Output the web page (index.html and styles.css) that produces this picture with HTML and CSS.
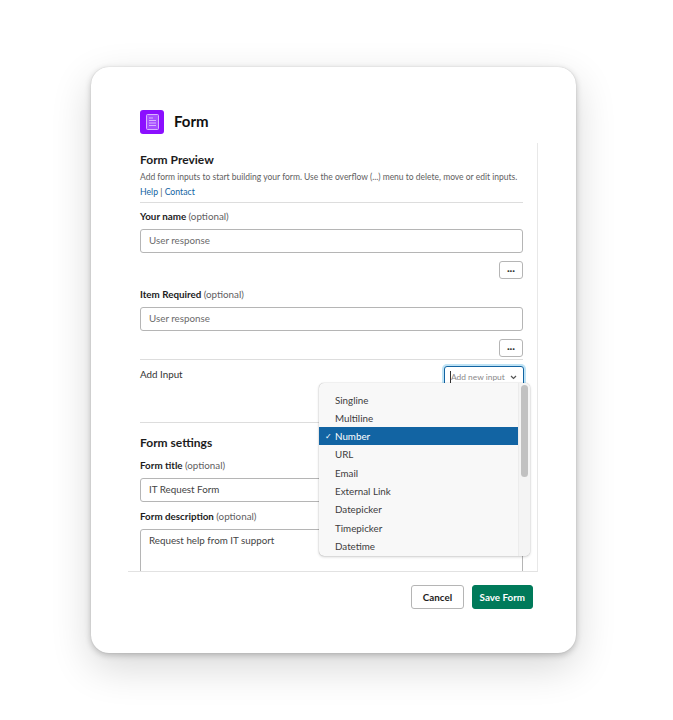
FILE: index.html
```html
<!DOCTYPE html>
<html lang="en">
  <head>
    <meta charset="UTF-8" />
    <title>Form</title>
    <link rel="stylesheet" href="styles.css">
  </head>
  <body>
    <div class="modal">
      <div class="modal-head">
        <div class="app-icon">
          <svg width="13" height="16" viewBox="0 0 13 16" fill="#a64dff" stroke="#d9b3ff" stroke-width="1">
            <rect x="0.5" y="0.5" width="12" height="15" rx="1"/>
            <path d="M3 4h4M3 6.5h7M3 9h7M3 11.5h7" fill="none"/>
          </svg>
        </div>
        <h1>Form</h1>
      </div>

      <div class="modal-body">
        <h2>Form Preview</h2>
        <p class="hint">Add form inputs to start building your form. Use the overflow (...) menu to delete, move or edit inputs.</p>
        <p class="links"><a href="#">Help</a> | <a href="#">Contact</a></p>
        <hr class="rule-thick">

        <label class="field-label first">Your name <span>(optional)</span></label>
        <div class="text-input">User response</div>
        <div class="actions"><button class="dots">&middot;&middot;&middot;</button></div>

        <label class="field-label second">Item Required <span>(optional)</span></label>
        <div class="text-input">User response</div>
        <div class="actions"><button class="dots">&middot;&middot;&middot;</button></div>
        <hr class="rule after-dots">

        <div class="add-row">
          <span>Add Input</span>
          <div class="picker">
            <span class="caret"></span>
            <span class="picker-text">Add new input</span>
            <svg width="7" height="5" viewBox="0 0 7 5" fill="none" stroke="#555" stroke-width="1.2"><path d="M1 1l2.5 2.5L6 1"/></svg>
          </div>
        </div>
        <hr class="rule">

        <h2 class="settings">Form settings</h2>
        <label class="field-label">Form title <span>(optional)</span></label>
        <div class="text-input value">IT Request Form</div>
        <label class="field-label desc">Form description <span>(optional)</span></label>
        <div class="text-input value area">Request help from IT support</div>
      </div>

      <div class="modal-foot">
        <button class="btn">Cancel</button>
        <button class="btn primary">Save Form</button>
      </div>

      <div class="menu">
        <ul>
          <li>Singline</li>
          <li>Multiline</li>
          <li class="selected">Number</li>
          <li>URL</li>
          <li>Email</li>
          <li>External Link</li>
          <li>Datepicker</li>
          <li>Timepicker</li>
          <li>Datetime</li>
        </ul>
        <div class="track"><div class="thumb"></div></div>
      </div>
    </div>
  </body>
</html>
```

FILE: styles.css
```css
* {
  box-sizing: border-box;
}
body {
  margin: 0;
  padding: 67px 0 0 91px;
  height: 720px;
  overflow: hidden;
  background: #fff;
  font-family: Lato, "Open Sans", sans-serif;
  color: #1d1c1d;
}
.modal {
  position: relative;
  width: 485px;
  height: 586px;
  background: #fff;
  border-radius: 18px;
  box-shadow: 0 0 1px rgba(0, 0, 0, 0.2), 0 2px 6px rgba(0, 0, 0, 0.22), 0 14px 40px rgba(0, 0, 0, 0.16);
}
.modal-head {
  display: flex;
  align-items: center;
  gap: 10px;
  padding: 43px 0 9px 49px;
  height: 76px;
}
.app-icon {
  width: 24px;
  height: 24px;
  border-radius: 3px;
  background: #8b0fff;
  display: flex;
  align-items: center;
  justify-content: center;
}
h1 {
  margin: 0 0 2px;
  font-size: 15px;
  font-weight: 700;
  color: #111;
}
.modal-body {
  margin-left: 37px;
  width: 410px;
  height: 429px;
  padding: 10px 14px 0 12px;
  overflow: hidden;
  border-right: 1px solid #e8e8e8;
  border-bottom: 1px solid #e2e2e2;
}
h2 {
  margin: 0;
  font-size: 12px;
  line-height: 14px;
  font-weight: 700;
  color: #1d1c1d;
}
.hint {
  margin: 4px 0 0;
  font-size: 8.5px;
  line-height: 12px;
  color: #616061;
  white-space: nowrap;
}
.links {
  margin: 3px 0 0;
  font-size: 8.7px;
  line-height: 12px;
  color: #555;
}
.links a {
  color: #1264a3;
  text-decoration: none;
}
hr {
  margin: 0;
  border: 0;
}
.rule-thick {
  margin-top: 4px;
  height: 1px;
  background: #ddd;
}
.rule {
  height: 1px;
  background: #ddd;
}
.rule.after-dots {
  margin-top: 2px;
}
.field-label {
  display: block;
  font-size: 9.8px;
  line-height: 13px;
  font-weight: 700;
  color: #1d1c1d;
}
.field-label span {
  font-weight: 400;
  color: #616061;
}
.field-label.first {
  margin-top: 7px;
}
.field-label.second {
  margin-top: 9px;
}
.field-label.desc {
  margin-top: 8px;
}
.text-input {
  margin-top: 6px;
  height: 24px;
  padding: 0 8px;
  border: 1px solid #b5b5b5;
  border-radius: 3px;
  font-size: 9.8px;
  line-height: 20px;
  color: #6b6a6b;
}
.text-input.value {
  color: #444;
}
.text-input.area {
  height: 70px;
}
.actions {
  display: flex;
  justify-content: flex-end;
  margin-top: 8px;
}
.dots {
  width: 24px;
  height: 18px;
  padding: 0;
  background: #fff;
  border: 1px solid #b5b5b5;
  border-radius: 3px;
  font-family: Lato, sans-serif;
  font-size: 10px;
  line-height: 14px;
  font-weight: 700;
  color: #333;
}
.add-row {
  display: flex;
  justify-content: space-between;
  align-items: flex-start;
  height: 62px;
  padding-top: 6px;
  font-size: 9.8px;
  line-height: 17px;
  color: #333;
}
.picker {
  display: flex;
  align-items: center;
  width: 80px;
  height: 22px;
  margin-right: -1px;
  padding: 0 6px 0 5px;
  background: #fff;
  border: 1px solid #1264a3;
  border-radius: 3px;
  box-shadow: 0 0 0 2px #bfe3f5;
}
.caret {
  width: 1px;
  height: 12px;
  background: #333;
}
.picker-text {
  flex: 1;
  font-size: 8.4px;
  color: #8a898a;
  white-space: nowrap;
}
.settings {
  margin-top: 13px;
}
.settings + .field-label {
  margin-top: 9px;
}
.modal-foot {
  display: flex;
  justify-content: flex-end;
  gap: 8px;
  padding: 13px 43px 0 0;
}
.btn {
  height: 24px;
  padding: 0 10.5px;
  background: #fff;
  border: 1px solid #b5b5b5;
  border-radius: 3px;
  font-family: Lato, sans-serif;
  font-size: 9.8px;
  font-weight: 700;
  color: #1d1c1d;
}
.btn.primary {
  padding: 0 7px;
  background: #007a5a;
  border-color: #007a5a;
  color: #fff;
}
.menu {
  position: absolute;
  left: 228px;
  top: 316px;
  width: 211px;
  height: 173px;
  overflow: hidden;
  background: #f8f8f8;
  border-radius: 5px;
  box-shadow: 0 0 1px rgba(0, 0, 0, 0.35), 0 1px 3px rgba(0, 0, 0, 0.18);
}
.menu ul {
  margin: 0;
  padding: 7.5px 0 0;
  list-style: none;
  width: 199px;
}
.menu li {
  height: 18.3px;
  padding-left: 16px;
  font-size: 9.8px;
  line-height: 18px;
  color: #3d3c3d;
}
.menu li.selected {
  position: relative;
  background: #1264a3;
  color: #fff;
}
.menu li.selected::before {
  content: "\2713";
  position: absolute;
  left: 6px;
  font-size: 8px;
}
.track {
  position: absolute;
  right: 0;
  top: 0;
  width: 12px;
  height: 100%;
  background: #f4f4f4;
  border-left: 1px solid #ececec;
}
.thumb {
  width: 7px;
  height: 92px;
  margin: 2px 0 0 2px;
  background: #c1c1c1;
  border-radius: 4px;
}
```
